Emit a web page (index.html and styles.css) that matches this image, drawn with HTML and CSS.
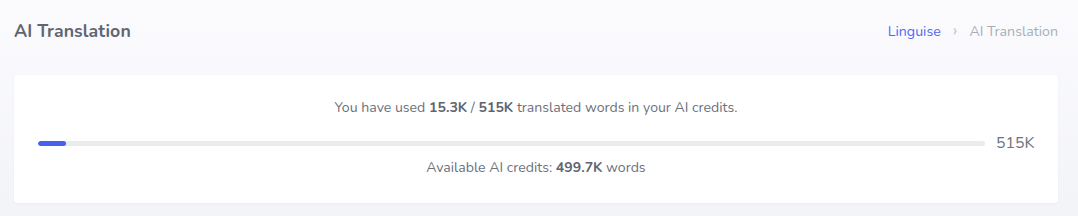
FILE: index.html
```html
<!DOCTYPE html>
<html>
<head>
<meta charset="utf-8">
<link rel="stylesheet" href="styles.css">
</head>
<body>
<div class="page">
  <header class="topbar">
    <h1 class="title">AI Translation</h1>
    <nav class="crumbs">
      <a class="crumb-link" href="#">Linguise</a>
      <span class="crumb-sep">›</span>
      <span class="crumb-active">AI Translation</span>
    </nav>
  </header>
  <section class="card">
    <p class="usage">You have used <b>15.3K</b> / <b>515K</b> translated words in your AI credits.</p>
    <div class="progress-row">
      <div class="track"><div class="fill" style="width:2.97%"></div></div>
      <span class="total">515K</span>
    </div>
    <p class="avail">Available AI credits: <b>499.7K</b> words</p>
  </section>
</div>
</body>
</html>
```
FILE: styles.css
```css
html, body {
  margin: 0;
  padding: 0;
}
body {
  background: linear-gradient(180deg, #fbfbfe 0%, #f3f4f8 100%);
  font-family: "Nunito", "Lato", "Open Sans", sans-serif;
  width: 1078px;
  height: 216px;
  overflow: hidden;
}
.page {
  padding: 0 20px 0 14px;
}
.topbar {
  display: flex;
  justify-content: space-between;
  align-items: center;
  height: 62px;
}
.title {
  margin: 0;
  font-size: 17.7px;
  font-weight: 700;
  color: #5f6672;
  letter-spacing: 0.1px;
}
.crumbs {
  display: flex;
  align-items: center;
  gap: 11px;
  font-size: 14.2px;
}
.crumb-link {
  color: #5468f0;
  text-decoration: none;
}
.crumb-sep {
  color: #c3c7ce;
  font-size: 18px;
  line-height: 1;
  margin: -2px 1px 0;
}
.crumb-active {
  color: #a9aeb6;
}
.card {
  margin-top: 13px;
  background: #fff;
  border-radius: 4px;
  box-shadow: 0 1px 3px rgba(30, 40, 80, 0.04);
  height: 128px;
  box-sizing: border-box;
  padding: 23px 24px 0 24px;
  color: #6c717a;
  font-size: 14.1px;
}
.card b {
  font-weight: 700;
  color: #5f6470;
}
.usage, .avail {
  margin: 0;
  text-align: center;
  line-height: 20px;
}
.progress-row {
  display: flex;
  align-items: center;
  gap: 11px;
  margin: 15px 0 5px;
  height: 20px;
}
.track {
  flex: 1;
  height: 5px;
  border-radius: 3px;
  background: #e9ebee;
  overflow: hidden;
}
.fill {
  height: 100%;
  background: #4661ee;
  border-radius: 3px;
}
.total {
  font-size: 15.8px;
  color: #6c717a;
  width: 38px;
}
```
